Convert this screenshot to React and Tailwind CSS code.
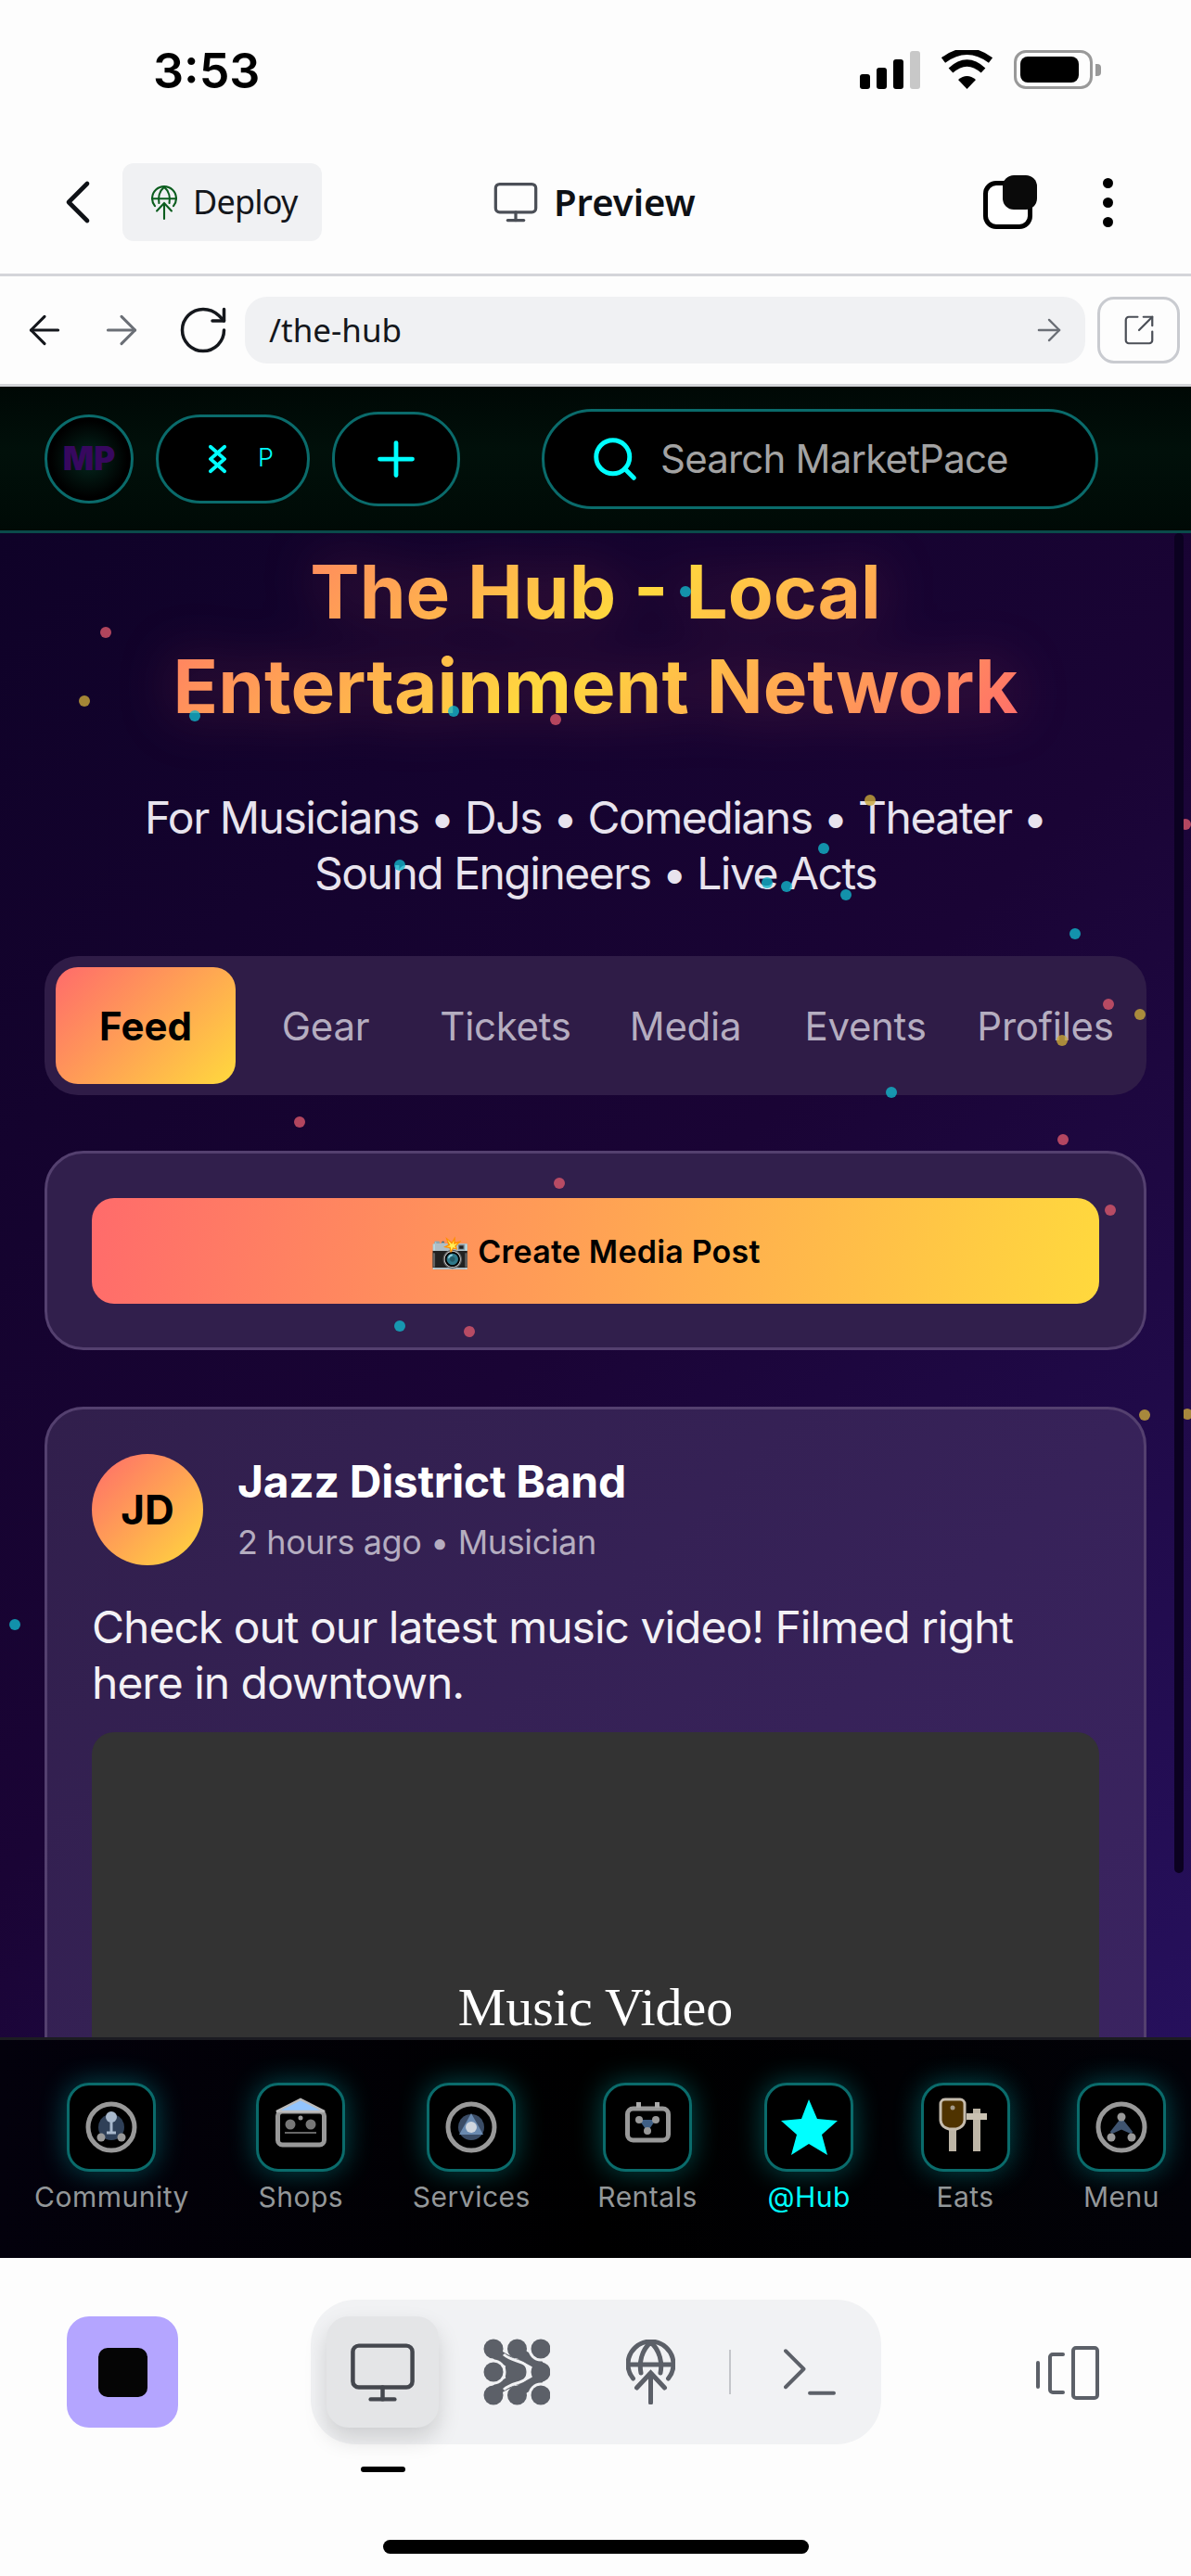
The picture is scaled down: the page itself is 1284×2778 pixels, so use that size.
import { ArrowLeft, ArrowRight, ChevronLeft, Monitor, Plus, RotateCw, Search, SquareArrowOutUpRight, Terminal } from "lucide-react";

const dots = [
  [114, 682, "r"], [91, 756, "g"], [210, 772, "t"], [489, 767, "t"], [599, 776, "r"], [739, 638, "t"],
  [938, 863, "g"], [1278, 889, "r"], [888, 915, "t"], [431, 933, "t"], [827, 952, "t"], [848, 956, "t"],
  [912, 965, "t"], [1159, 1007, "t"], [1195, 1083, "r"], [1229, 1094, "g"], [1145, 1122, "g"], [961, 1178, "t"],
  [323, 1210, "r"], [1146, 1229, "r"], [603, 1276, "r"], [1197, 1305, "r"], [431, 1430, "t"], [506, 1436, "r"],
  [1234, 1526, "g"], [1280, 1525, "g"], [16, 1752, "t"],
];
const dotColor = { r: "#d9566a", g: "#c9a83a", t: "#12b5c9" };

const UploadGlobe = ({ className, color, weight = 5 }) => (
  <svg viewBox="0 0 53 70" className={className} fill="none" stroke={color} strokeWidth={weight} strokeLinecap="round">
    <path d="M7.5 42A24.5 24.5 0 1 1 45.5 42" />
    <path d="M2 27h49M26.5 3C16 12 14 26 16 36M26.5 3C37 12 39 26 37 36" />
    <path d="M26.5 68V36M11.5 52l15-16 15 16" />
  </svg>
);

const Blobs = ({ className }) => (
  <svg viewBox="0 0 72 72" className={className} fill="#5c6068">
    <ellipse cx="35" cy="36" rx="12" ry="14" />
    <path d="M11 11C15 24 33 20 35 36 33 52 15 48 11 61" fill="none" stroke="#5c6068" strokeWidth="12" />
    <path d="M36.5 11C42 24 60 20 62 36 60 52 42 48 36.5 61" fill="none" stroke="#5c6068" strokeWidth="12" />
    <path d="M22 17C33 27 48 22 48 36 48 50 33 45 22 55" fill="none" stroke="#f1f2f4" strokeWidth="3" />
    <circle cx="11" cy="36" r="13.5" fill="#f1f2f4" />
    <circle cx="62" cy="11" r="13.5" fill="#f1f2f4" />
    <circle cx="62" cy="61" r="13.5" fill="#f1f2f4" />
    <circle cx="11" cy="11" r="10.5" />
    <circle cx="36.5" cy="11" r="10.5" />
    <circle cx="62" cy="11" r="10.5" />
    <circle cx="11" cy="36" r="10.5" />
    <circle cx="62" cy="36" r="10.5" />
    <circle cx="11" cy="61" r="10.5" />
    <circle cx="36.5" cy="61" r="10.5" />
    <circle cx="62" cy="61" r="10.5" />
  </svg>
);

const CommunityIcon = () => (
  <svg viewBox="0 0 72 72" className="w-[72px] h-[72px]">
    <circle cx="36" cy="36" r="25" fill="none" stroke="#999" strokeWidth="5" />
    <circle cx="36" cy="36" r="14" fill="#2f4058" />
    <circle cx="36" cy="25" r="6" fill="#a8b8cc" />
    <path d="M36 28v14M31 42h10" stroke="#a8b8cc" strokeWidth="3" />
    <circle cx="25" cy="47" r="4.5" fill="#999" />
    <circle cx="47" cy="47" r="4.5" fill="#999" />
  </svg>
);

const ShopsIcon = () => (
  <svg viewBox="0 0 72 72" className="w-[72px] h-[72px]">
    <rect x="11.5" y="19" width="50" height="36" rx="5" fill="none" stroke="#999" strokeWidth="5" />
    <path d="M10 19l26-13 26 13z" fill="#93c5fd" stroke="#bbb" strokeWidth="2.5" />
    <circle cx="25" cy="33" r="5.5" fill="#777" />
    <circle cx="47" cy="33" r="5.5" fill="#777" />
    <circle cx="36" cy="26" r="2.5" fill="#999" />
    <path d="M19 42h34" stroke="#666" strokeWidth="2" />
  </svg>
);

const ServicesIcon = () => (
  <svg viewBox="0 0 72 72" className="w-[72px] h-[72px]">
    <circle cx="36" cy="36" r="25" fill="none" stroke="#999" strokeWidth="5" />
    <circle cx="36" cy="36" r="14" fill="#3a4c66" />
    <path d="M36 21l13 23H23z" fill="#6a8ab0" />
    <circle cx="36" cy="36" r="6" fill="#cfd6df" />
  </svg>
);

const RentalsIcon = () => (
  <svg viewBox="0 0 72 72" className="w-[72px] h-[72px]">
    <rect x="14.5" y="16" width="44" height="34" rx="6" fill="none" stroke="#999" strokeWidth="5" />
    <path d="M24 9h5v6h-5zM44 9h5v6h-5z" fill="#aaa" />
    <path d="M27 28h18l-9 13z" fill="#3f5f85" />
    <circle cx="27" cy="28" r="4" fill="#999" />
    <circle cx="45" cy="28" r="4" fill="#999" />
    <circle cx="36" cy="40" r="4" fill="#999" />
  </svg>
);

const EatsIcon = () => (
  <svg viewBox="0 0 72 72" className="w-[72px] h-[72px]">
    <path d="M18 34h8v28h-8zM44 16h8v46h-8z" fill="#bdb5a6" />
    <path d="M37 21h22v7H37z" fill="#c9c1b2" />
    <path d="M9 11a5 5 0 0 1 5-5h16a5 5 0 0 1 5 5v17c0 6-5 9-9 10h-8c-4-1-9-4-9-10z" fill="#4f3300" stroke="#c5bcae" strokeWidth="3" />
    <circle cx="22" cy="15" r="2.5" fill="#a39a8a" />
  </svg>
);

const MenuIcon = () => (
  <svg viewBox="0 0 72 72" className="w-[72px] h-[72px]">
    <circle cx="36" cy="36" r="25" fill="none" stroke="#999" strokeWidth="5" />
    <path d="M36 28l11 14-11-5-11 5z" fill="#3f5470" stroke="#3f5470" strokeWidth="3" />
    <circle cx="36" cy="25" r="4.5" fill="#999" />
    <circle cx="25" cy="47" r="4.5" fill="#999" />
    <circle cx="47" cy="47" r="4.5" fill="#999" />
  </svg>
);

const StarIcon = () => (
  <svg viewBox="0 0 72 72" className="w-[72px] h-[72px]">
    <path d="M36 6l9 21 22 2-17 15 6 22-20-12-19 12 6-22-17-15 22-2z" fill="#00ffff" />
  </svg>
);

const navItems = [
  { label: "Community", icon: <CommunityIcon /> },
  { label: "Shops", icon: <ShopsIcon /> },
  { label: "Services", icon: <ServicesIcon /> },
  { label: "Rentals", icon: <RentalsIcon /> },
  { label: "@Hub", icon: <StarIcon />, active: true },
  { label: "Eats", icon: <EatsIcon /> },
  { label: "Menu", icon: <MenuIcon /> },
];

const tabs = ["Gear", "Tickets", "Media", "Events", "Profiles"];

const StatusBar = () => (
  <div className="h-[130px] flex items-start justify-between pt-[51px] pl-[165px] pr-[97px]">
    <span className="text-[52px] leading-[52px] font-semibold text-black font-['Inter',sans-serif]">3:53</span>
    <div className="flex items-center gap-[22px] pt-[3px]">
      <div className="flex items-end gap-[7px] h-[41px]">
        <div className="w-[11px] h-[16px] rounded-[3px] bg-black" />
        <div className="w-[11px] h-[23px] rounded-[3px] bg-black" />
        <div className="w-[11px] h-[32px] rounded-[3px] bg-black" />
        <div className="w-[11px] h-[41px] rounded-[3px] bg-[#c8c8c8]" />
      </div>
      <svg viewBox="0 0 57 42" className="w-[57px] h-[42px]">
        <path d="M28.5 42L19 32Q28.5 24 38 32z" fill="#000" />
        <path d="M11 22Q28.5 6 46 22M3 11Q28.5-8 54 11" fill="none" stroke="#000" strokeWidth="7" />
      </svg>
      <div className="flex items-center gap-[3px]">
        <div className="w-[85px] h-[42px] rounded-[13px] border-[3px] border-[#999] pl-[4px] pr-[12px] py-[4px]">
          <div className="w-full h-full rounded-[8px] bg-black" />
        </div>
        <div className="w-[6px] h-[13px] rounded-r-[4px] bg-[#999]" />
      </div>
    </div>
  </div>
);

const TopNav = () => (
  <div className="h-[165px] flex items-center pl-[44px] pr-[84px] pt-[11px]">
    <ChevronLeft className="w-[80px] h-[80px] text-[#0e1116]" strokeWidth={1.4} />
    <div className="w-[215px] h-[84px] rounded-[12px] bg-[#f0f1f3] flex items-center gap-[17px] pl-[31px] ml-[8px]">
      <UploadGlobe className="w-[28px] h-[37px]" color="#0b5d1e" weight={4} />
      <span className="text-[36px] tracking-[-0.8px] text-[#14171c] font-['Noto_Sans',sans-serif]">Deploy</span>
    </div>
    <Monitor className="w-[52px] h-[52px] text-[#4b4f57] ml-[183px]" strokeWidth={1.5} />
    <span className="text-[40px] font-semibold text-[#0e1116] ml-[15px] font-['Noto_Sans',sans-serif]">Preview</span>
    <div className="relative w-[58px] h-[58px] ml-auto">
      <div className="absolute left-0 top-[6px] w-[53px] h-[52px] rounded-[14px] border-[5px] border-black bg-white" />
      <div className="absolute left-[21px] top-0 w-[37px] h-[37px] rounded-[12px] bg-[#0a0a0a]" />
    </div>
    <div className="flex flex-col gap-[10px] ml-[71px]">
      <div className="w-[11px] h-[11px] rounded-full bg-black" />
      <div className="w-[11px] h-[11px] rounded-full bg-black" />
      <div className="w-[11px] h-[11px] rounded-full bg-black" />
    </div>
  </div>
);

const UrlBar = () => (
  <div className="h-[122px] border-y-[3px] border-[#d4d5d9] flex items-center pl-[23px] pr-[12px]">
    <ArrowLeft className="w-[50px] h-[50px] text-[#14171c]" strokeWidth={1.5} />
    <ArrowRight className="w-[50px] h-[50px] text-[#6b6f76] ml-[33px]" strokeWidth={1.5} />
    <RotateCw className="w-[60px] h-[60px] text-[#14171c] ml-[33px]" strokeWidth={1.4} />
    <div className="w-[906px] h-[72px] rounded-[24px] bg-[#f0f1f3] flex items-center justify-between pl-[26px] pr-[20px] ml-[15px]">
      <span className="text-[35px] text-[#14171c] font-['Noto_Sans',sans-serif]">/the-hub</span>
      <ArrowRight className="w-[38px] h-[38px] text-[#6b6f76]" strokeWidth={1.5} />
    </div>
    <div className="w-[89px] h-[72px] rounded-[18px] border-[3px] border-[#c9cbd0] flex items-center justify-center ml-[13px]">
      <SquareArrowOutUpRight className="w-[38px] h-[38px] text-[#4b4f57]" strokeWidth={1.4} />
    </div>
  </div>
);

const AppHeader = () => (
  <div className="h-[158px] shrink-0 border-b-[3px] border-[#0a4a4a] bg-[linear-gradient(180deg,#000805,#01100a_45%,#000a06)] flex items-center pl-[48px] font-['Inter',sans-serif]">
    <div className="w-[96px] h-[96px] rounded-full border-[3px] border-[#0a6b6b] bg-[radial-gradient(circle,#04291f,#000_65%)] flex items-center justify-center">
      <span className="text-[35px] font-black text-[#37085f]">MP</span>
    </div>
    <div className="w-[166px] h-[96px] rounded-[48px] border-[3px] border-[#0a6b6b] bg-black flex items-center ml-[24px] pl-[54px]">
      <svg viewBox="0 0 20 32" className="w-[19px] h-[32px]" fill="none" stroke="#00ffff" strokeWidth="4" strokeLinecap="round">
        <path d="M2 2l16 14L2 30M18 2L2 16l16 14" />
      </svg>
      <span className="text-[27px] font-light text-[#00ffff] ml-[34px]">P</span>
    </div>
    <div className="w-[138px] h-[102px] rounded-[50px] border-[3px] border-[#0a6b6b] bg-black flex items-center justify-center ml-[24px]">
      <Plus className="w-[60px] h-[60px] text-[#00ffff]" strokeWidth={1.9} />
    </div>
    <div className="w-[600px] h-[108px] rounded-[54px] border-[3px] border-[#0a6b6b] bg-black flex items-center ml-[88px] pl-[49px]">
      <Search className="w-[54px] h-[54px] text-[#00ffff]" strokeWidth={2.2} />
      <span className="text-[42px] tracking-[-0.8px] text-[#a3a3a3] ml-[22px]">Search MarketPace</span>
    </div>
  </div>
);

const Feed = () => (
  <div className="relative flex-1 min-h-0 overflow-hidden bg-[linear-gradient(135deg,#0f0228,#1a0435_50%,#26105c)] px-[48px] pt-[12px] font-['Inter',sans-serif]">
    <h1 className="mx-auto w-[930px] text-[80px] leading-[102px] font-bold text-center text-transparent bg-clip-text bg-[linear-gradient(135deg,#ff6b6b,#ffd93d,#ff6b6b)] drop-shadow-[0_0_30px_rgba(255,107,107,0.25)]">
      The Hub - Local<br />Entertainment Network
    </h1>
    <p className="mt-[61px] text-[48px] leading-[60px] tracking-[-1.5px] text-center text-[#e8e4ee]">
      For Musicians • DJs • Comedians • Theater •<br />Sound Engineers • Live Acts
    </p>

    <div className="mt-[59px] h-[150px] rounded-[36px] bg-[#2f1c47] flex items-center pl-[12px]">
      <div className="w-[194px] h-[126px] rounded-[24px] bg-[linear-gradient(135deg,#ff6b6b,#ffd93d)] flex items-center justify-center text-[42px] font-bold text-black">
        Feed
      </div>
      {tabs.map((tab) => (
        <div key={tab} className="w-[194px] text-center text-[42px] tracking-[-0.3px] text-[#b5adc0]">{tab}</div>
      ))}
    </div>

    <div className="mt-[60px] h-[215px] rounded-[42px] border-[3px] border-[#54406f] bg-[#311f4c] px-[48px] pt-[48px]">
      <div className="h-[114px] rounded-[24px] bg-[linear-gradient(100deg,#ff6b6b,#ffd93d)] flex items-center justify-center text-[34px] tracking-[0.2px] font-semibold text-black">
        📸 Create Media Post
      </div>
    </div>

    <div className="mt-[61px] rounded-[42px] border-[3px] border-[#54406f] bg-[linear-gradient(135deg,#311f4c,#3b2462)] px-[48px] pt-[48px] h-[800px]">
      <div className="flex items-start gap-[37px]">
        <div className="w-[120px] h-[120px] rounded-full bg-[linear-gradient(135deg,#ff6b6b,#ffd93d)] flex items-center justify-center text-[44px] font-bold text-black">
          JD
        </div>
        <div>
          <p className="text-[48px] leading-[60px] tracking-[-0.3px] font-bold text-white">Jazz District Band</p>
          <p className="mt-[12px] text-[36px] leading-[46px] tracking-[-0.4px] text-[#b5adc0]">2 hours ago • Musician</p>
        </div>
      </div>
      <p className="mt-[37px] text-[48px] leading-[60px] tracking-[-1px] text-[#f3f1f5]">
        Check out our latest music video! Filmed right<br />here in downtown.
      </p>
      <div className="mt-[23px] h-[500px] rounded-[24px] bg-[#333333] text-center pt-[262px] text-[58px] leading-[70px] text-white font-['Liberation_Serif',serif]">
        Music Video
      </div>
    </div>

    {dots.map(([x, y, c], i) => (
      <div
        key={i}
        className="absolute w-[12px] h-[12px] rounded-full opacity-80"
        style={{ left: x - 6, top: y - 581, background: dotColor[c] }}
      />
    ))}
    <div className="absolute right-[8px] top-0 w-[10px] h-[1445px] rounded-full bg-[#0b0120]" />
  </div>
);

const BottomNav = () => (
  <div className="h-[238px] shrink-0 border-t-[3px] border-[#1c1c22] bg-[linear-gradient(90deg,#03010c,#000,#020208)] flex justify-between pl-[37px] pr-[27px] pt-[46px] font-['Inter',sans-serif]">
    {navItems.map((item) => (
      <div key={item.label} className="flex flex-col items-center">
        <div className="w-[96px] h-[96px] rounded-[24px] border-[3px] border-[#0a6b6b] bg-black shadow-[0_0_30px_rgba(0,255,255,0.3)] flex items-center justify-center">
          {item.icon}
        </div>
        <span className={`mt-[9px] text-[30px] leading-[36px] tracking-[0.5px] ${item.active ? "text-[#00ffff]" : "text-[#939799]"}`}>
          {item.label}
        </span>
      </div>
    ))}
  </div>
);

const Toolbar = () => (
  <div className="relative h-[343px] shrink-0 bg-[#fdfdfd]">
    <div className="flex items-start pt-[45px] pl-[72px]">
      <div className="mt-[18px] w-[120px] h-[120px] rounded-[24px] bg-[#b4a5ff] flex items-center justify-center">
        <div className="w-[53px] h-[53px] rounded-[10px] bg-[#050505]" />
      </div>
      <div className="ml-[143px] w-[615px] h-[156px] rounded-[48px] bg-[#f1f2f4] flex items-center pl-[17px]">
        <div className="w-[121px] h-[120px] rounded-[24px] bg-[#e4e5e7] shadow-[0_12px_24px_rgba(0,0,0,0.15)] flex items-center justify-center">
          <Monitor className="w-[77px] h-[77px] text-[#44474e]" strokeWidth={1.4} />
        </div>
        <Blobs className="w-[72px] h-[72px] ml-[48px]" />
        <UploadGlobe className="w-[53px] h-[70px] ml-[82px]" color="#5c6068" />
        <div className="w-[2px] h-[48px] bg-[#c4c6ca] ml-[58px]" />
        <Terminal className="w-[78px] h-[78px] text-[#5c6068] ml-[46px]" strokeWidth={1.2} />
      </div>
      <svg viewBox="0 0 68 58" className="w-[68px] h-[58px] ml-[167px] mt-[50px]" fill="none" stroke="#5c6068" strokeWidth="4" strokeLinecap="round">
        <path d="M2 18v26" />
        <path d="M29 9h-11a3 3 0 0 0-3 3v35a3 3 0 0 0 3 3h11" />
        <rect x="40" y="2" width="26" height="54" rx="3" />
      </svg>
    </div>
    <div className="absolute left-[389px] top-[225px] w-[48px] h-[6px] rounded-full bg-black" />
    <div className="absolute left-[413px] top-[304px] w-[459px] h-[15px] rounded-full bg-black" />
  </div>
);

export default function App() {
  return (
    <div className="w-[1284px] h-[2778px] flex flex-col overflow-hidden bg-[#fdfdfd]">
      <StatusBar />
      <TopNav />
      <UrlBar />
      <AppHeader />
      <Feed />
      <BottomNav />
      <Toolbar />
    </div>
  );
}
